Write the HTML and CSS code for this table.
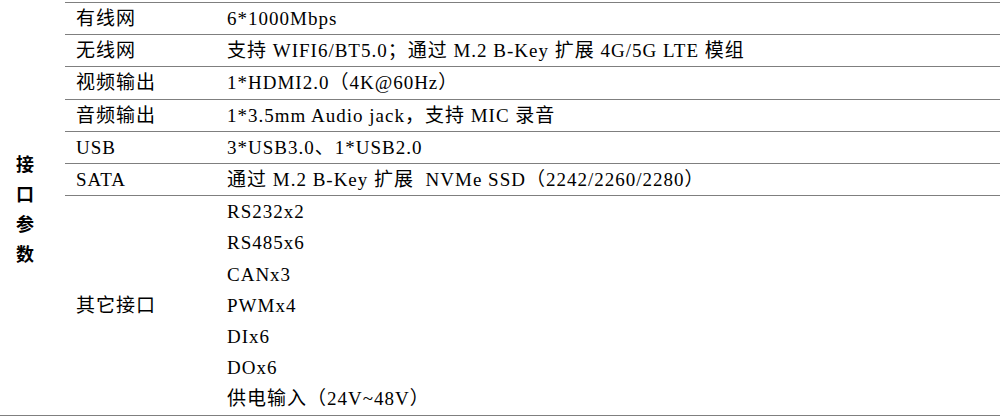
FILE: index.html
```html
<!DOCTYPE html>
<html lang="zh-CN">
<head>
<meta charset="utf-8">
<title>接口参数</title>
<link rel="stylesheet" href="styles.css">
</head>
<body>
<div class="spec">
  <div class="group"><span>接</span><span>口</span><span>参</span><span>数</span></div>
  <div class="k">有线网</div><div class="v">6*1000Mbps</div>
  <div class="k">无线网</div><div class="v">支持 WIFI6/BT5.0；通过 M.2 B-Key 扩展 4G/5G LTE 模组</div>
  <div class="k">视频输出</div><div class="v">1*HDMI2.0（4K@60Hz）</div>
  <div class="k">音频输出</div><div class="v">1*3.5mm Audio jack，支持 MIC 录音</div>
  <div class="k">USB</div><div class="v">3*USB3.0、1*USB2.0</div>
  <div class="k">SATA</div><div class="v">通过 M.2 B-Key 扩展 &nbsp;NVMe SSD（2242/2260/2280）</div>
  <div class="k multi">其它接口</div>
  <div class="v list">
    <div>RS232x2</div>
    <div>RS485x6</div>
    <div>CANx3</div>
    <div>PWMx4</div>
    <div>DIx6</div>
    <div>DOx6</div>
    <div>供电输入（24V~48V）</div>
  </div>
</div>
</body>
</html>
```

FILE: styles.css
```css
html, body {
  margin: 0;
  padding: 0;
  background: #ffffff;
}

body {
  font-family: "Liberation Serif", "Noto Sans CJK SC", serif;
  font-size: 19px;
  font-weight: 400;
  letter-spacing: 1px;
  color: #000;
}

.spec {
  display: grid;
  grid-template-columns: 65px 152px 1fr;
  width: 1000px;
  margin-top: 2px;
  border-bottom: 1px solid #7f7f7f;
  line-height: 31.2px;
}

.group {
  grid-column: 1;
  grid-row: 1 / span 7;
  display: flex;
  flex-direction: column;
  justify-content: center;
  align-items: flex-start;
  padding-left: 16px;
  font-family: "Noto Sans CJK SC", sans-serif;
  font-weight: 700;
  font-size: 18px;
  line-height: 30px;
  letter-spacing: 0;
}

.k, .v {
  border-top: 1px solid #7f7f7f;
  white-space: nowrap;
}

.k {
  grid-column: 2;
  padding-left: 11px;
}

.v {
  grid-column: 3;
  padding-left: 10px;
}

.k.multi {
  display: flex;
  align-items: center;
}
```
